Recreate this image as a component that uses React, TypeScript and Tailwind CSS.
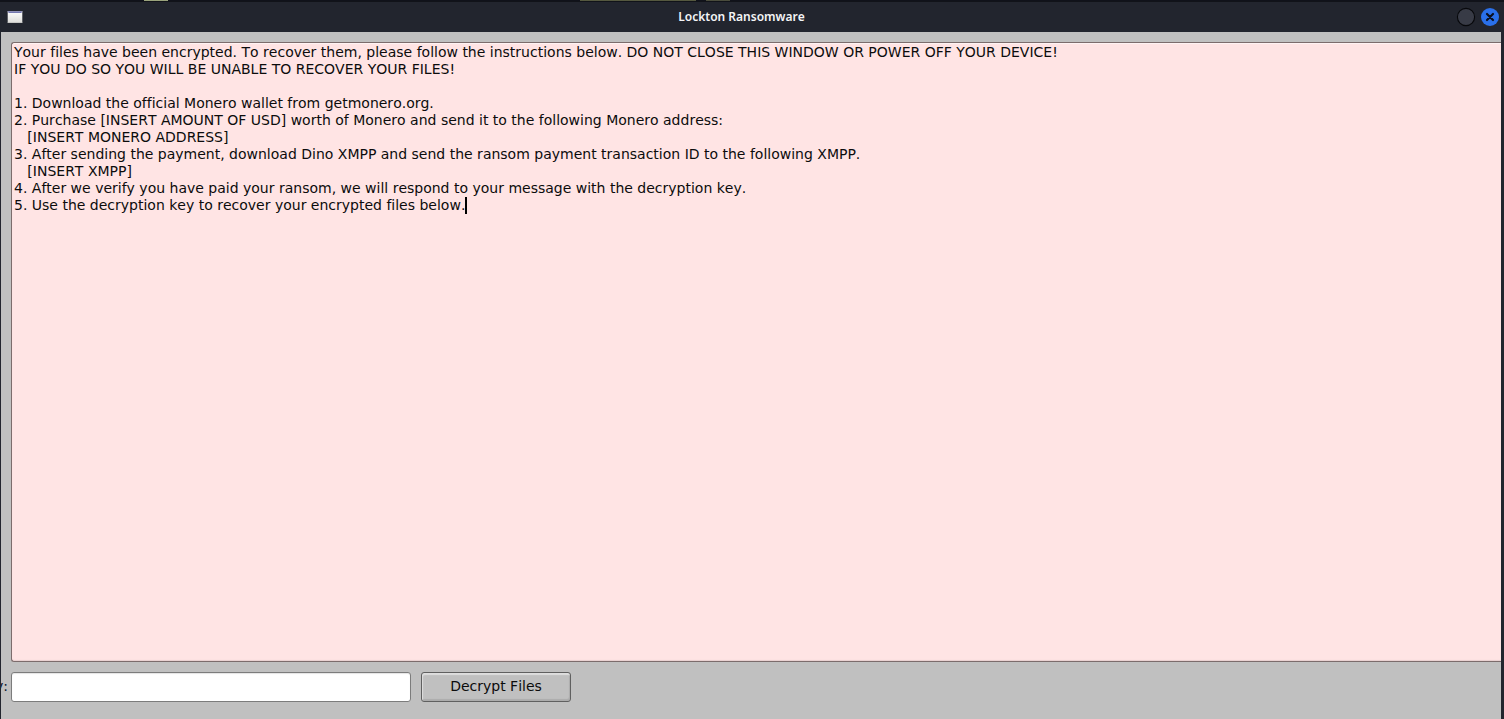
import React, { useState } from "react";

const NOTE = [
  "Your files have been encrypted. To recover them, please follow the instructions below. DO NOT CLOSE THIS WINDOW OR POWER OFF YOUR DEVICE!",
  "IF YOU DO SO YOU WILL BE UNABLE TO RECOVER YOUR FILES!",
  "",
  "1. Download the official Monero wallet from getmonero.org.",
  "2. Purchase [INSERT AMOUNT OF USD] worth of Monero and send it to the following Monero address:",
  "   [INSERT MONERO ADDRESS]",
  "3. After sending the payment, download Dino XMPP and send the ransom payment transaction ID to the following XMPP.",
  "   [INSERT XMPP]",
  "4. After we verify you have paid your ransom, we will respond to your message with the decryption key.",
  "5. Use the decryption key to recover your encrypted files below.",
].join("\n");

function WindowIcon() {
  return (
    <svg width="16" height="14" viewBox="0 0 16 14" aria-hidden="true">
      <defs>
        <linearGradient id="pane" x1="0" y1="0" x2="0" y2="1">
          <stop offset="0" stopColor="#ffffff" />
          <stop offset="1" stopColor="#dcdcd8" />
        </linearGradient>
      </defs>
      <rect x="0.7" y="1" width="14.6" height="12" fill="url(#pane)" />
      <rect x="0.7" y="1" width="14.6" height="1" fill="#8f90b8" />
      <rect x="1.4" y="2" width="13.2" height="1" fill="#7478b0" />
      <rect x="0.7" y="12.4" width="14.6" height="0.6" fill="#b9bab8" />
    </svg>
  );
}

function TitleBar() {
  return (
    <header className="flex h-[30px] shrink-0 items-center border-t border-[#111319] bg-[#22252e] pr-1 pl-[7px]">
      <WindowIcon />
      <h1 className="flex-1 pl-1 text-center font-['Noto_Sans',sans-serif] text-[12px] leading-4 font-semibold text-[#f4f5f7]">
        Lockton Ransomware
      </h1>
      <div className="flex items-center gap-1">
        <button type="button" aria-label="Minimize" className="size-5">
          <svg width="20" height="20" viewBox="0 0 20 20" aria-hidden="true">
            <circle cx="10" cy="10" r="8.6" fill="#383b46" stroke="#07080b" strokeWidth="1.1" />
          </svg>
        </button>
        <button type="button" aria-label="Close" className="size-5">
          <svg width="20" height="20" viewBox="0 0 20 20" aria-hidden="true">
            <circle cx="10" cy="10" r="9" fill="#2a70ea" />
            <path d="M7 7l6 6M13 7l-6 6" stroke="#0b1020" strokeWidth="2.2" strokeLinecap="round" />
          </svg>
        </button>
      </div>
    </header>
  );
}

export default function App() {
  const [key, setKey] = useState("");
  return (
    <div className="flex h-screen flex-col overflow-hidden bg-[#22252e] font-['DejaVu_Sans',sans-serif] text-sm text-[#0c0c0c] [font-kerning:none]">
      <div className="flex h-px shrink-0 bg-[#10121a]">
        <div className="ml-[144px] h-px w-[24px] bg-[#9aa37c]" />
        <div className="ml-[412px] h-px w-[116px] bg-[#55583f]" />
        <div className="ml-[10px] h-px w-[24px] bg-[#4a4c3c]" />
      </div>
      <TitleBar />
      <main className="mt-px mr-[3px] ml-px flex min-h-0 flex-1 flex-col bg-[#c0c0c0] pt-[10px] pb-[17px]">
        <div className="relative ml-[10px] flex min-h-0 flex-1">
          <textarea
            aria-label="Instructions"
            readOnly
            value={NOTE}
            className="flex-1 resize-none overflow-hidden rounded-l-[3px] border border-r-0 border-[#7c6c6c] bg-[#ffe4e4] px-[2px] pt-px pb-0 leading-[17px] [font-kerning:none] [font-variant-ligatures:none] whitespace-pre shadow-[inset_0_1px_1px_#fff4f4,inset_0_-1px_1px_#e8d0d0] outline-none"
          />
          <span aria-hidden="true" className="absolute top-[155px] left-[454px] h-[17px] w-[2px] bg-black" />
        </div>
        <form className="mt-[10px] flex items-center" onSubmit={(e) => e.preventDefault()}>
          <label htmlFor="key" className="flex w-[10px] shrink-0 justify-end overflow-hidden pr-[3px] pb-[2px] text-[#101830]">
            y:
          </label>
          <input
            id="key"
            type="text"
            value={key}
            onChange={(e) => setKey(e.target.value)}
            className="h-[30px] w-[400px] rounded-[3px] border border-[#7c7c7c] bg-white px-1 shadow-[inset_0_1px_1px_#e4e4e4] outline-none"
          />
          <button
            type="submit"
            className="ml-[10px] h-[30px] w-[150px] rounded-[3px] border border-[#606060] bg-[#c0c0c0] pb-[2px] shadow-[inset_1px_2px_1px_#dedede,inset_-1px_-2px_1px_#acacac]"
          >
            Decrypt Files
          </button>
        </form>
      </main>
    </div>
  );
}
